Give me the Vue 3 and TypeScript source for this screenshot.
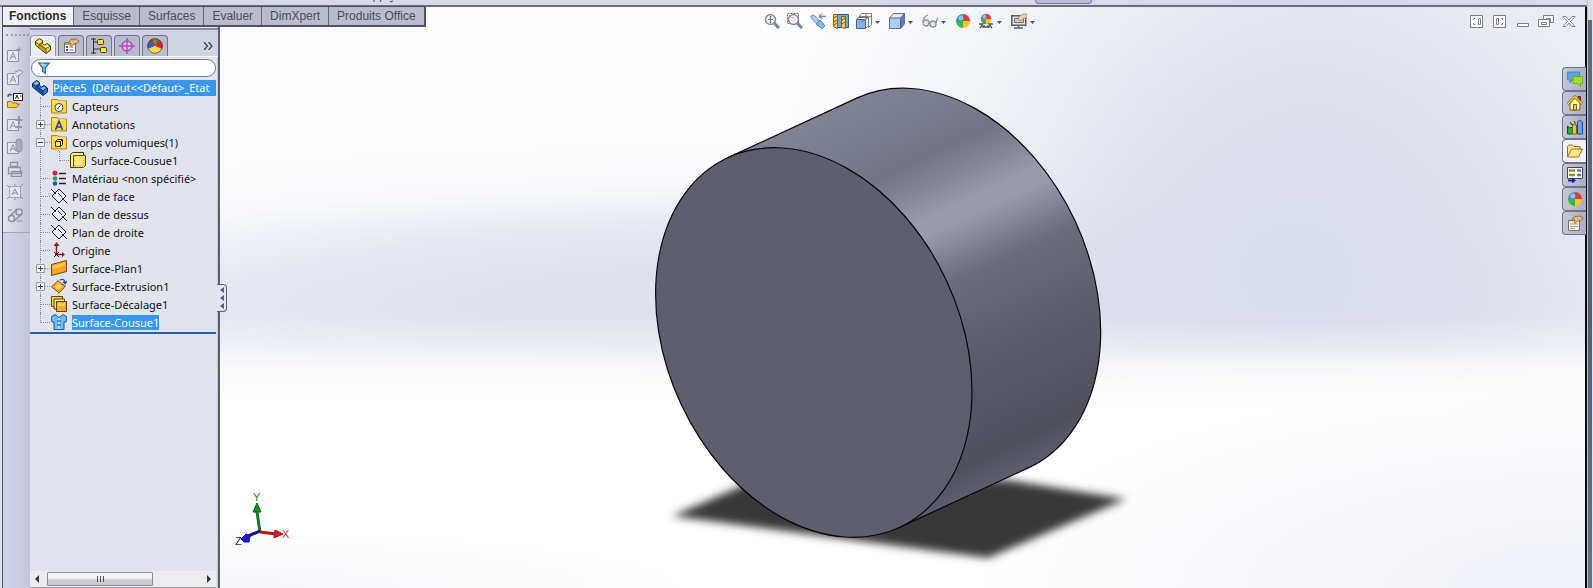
<script setup lang="ts">
import { ref } from 'vue'

interface TreeRow {
  label: string
  icon: string
  depth: number
  expander?: '+' | '-'
  selected?: boolean
  last?: boolean
}

const ball =
  '<path d="M8 8V1A7 7 0 0 0 1 8z" fill="#3d8fe0"/><path d="M8 8V1A7 7 0 0 1 15 8z" fill="#e8343a"/>' +
  '<path d="M8 8H1A7 7 0 0 0 8 15z" fill="#3bb54a"/><path d="M8 8H15A7 7 0 0 1 8 15z" fill="#f3c623"/>' +
  '<circle cx="6" cy="5" r="2.5" fill="#fff" opacity=".45"/>'
const folder = '<path d="M.500 1.500h6l1.500 1.500h7.500v12h-15z" fill="#ffd83c" stroke="#b28a10"/><path d="M1.500 4h13" stroke="#fff3a8"/>'
const hand = '<path d="M5 5l3-3.500 5-.5 3 2-2 2.500-3 .5-3 2.500-1-1 1-2z" fill="#eab678" stroke="#8a5a2b" stroke-width=".8"/>'
const part = (light: string, mid: string, dark: string, line: string) =>
  `<path d="M.500 3.500l4-3 3 2v3l2 1.500 2.500-1.500 3.500 2.500v4l-4.500 3.500-10.500-8.500z" fill="${mid}" stroke="${line}"/>` +
  `<path d="M1.500 3.500l3-2 2.500 1.500-3 2zM8.500 8.500l3.500-2 2.500 2-3.500 2z" fill="${light}"/>` +
  `<path d="M4.500 6l2.500-1.500v3l4 3v4.500l-6.500-5.500z" fill="${dark}"/><path d="M1 4.500l3 2v3M4 6.500l3.500-2M11 10.500v4.500M11 10.500l4-2.500M4 6.500l7 4.500" fill="none" stroke="${line}" stroke-width=".7"/>`
const sheet = '<path d="M.500 4.500h11v11h-11z" fill="#e6e8f0" stroke="#8d91a3"/><path d="M3 13.500l3-7 3 7M4 11h4" fill="none" stroke="#8d91a3"/>'
const plane = '<path d="M8 1l7 7-7 7-7-7z" fill="#eceef5" stroke="#222"/><path d="M0 1l5 5M11 10l5 5M7 5l4 4" stroke="#222" fill="none"/>'
const lens = '<path d="M10 10l5 5" stroke="#5e86bf" stroke-width="3"/><circle cx="6.500" cy="6.500" r="5" fill="#eef1f6" stroke="#888b96" stroke-width="1.500"/>'

const icons: Record<string, string> = {
  part: part('#fff36b', '#f2d322', '#c79c14', '#3a3006'),
  partBlue: part('#7cc4ff', '#2277d8', '#0f50ad', '#08265c'),
  props: '<path d="M1.500 4.500h11v10h-11z" fill="#f7f7f2" stroke="#6d6f78"/><path d="M2 6h10" stroke="#d6a437" stroke-width="2"/><path d="M3 9h2M3 12h2" stroke="#2d65c8" stroke-width="2"/><path d="M6.500 9h4M6.500 12h4" stroke="#777"/>' + hand,
  config: '<path d="M2.500 0v16M2.500 4h5M2.500 11h7M0 1h5M0 15h5" stroke="#333" fill="none"/><rect x="6.500" y="1.500" width="6" height="5" rx="1" fill="#f4e13a" stroke="#4c4300"/><rect x="9.500" y="9.500" width="6" height="5" rx="1" fill="#f4e13a" stroke="#4c4300"/>',
  target: '<circle cx="8" cy="8" r="5" fill="#e3c5ec" stroke="#b445c8" stroke-width="1.500"/><path d="M8 0v16M0 8h16" stroke="#b445c8" stroke-width="1.500"/>',
  wheel: '<path d="M8 8L1 11A7.500 7.500 0 0 1 5 1z" fill="#2b62cc"/><path d="M8 8L5 1a7.500 7.500 0 0 1 6 0z" fill="#3aa648"/><path d="M8 8l3-7a7.500 7.500 0 0 1 4 10z" fill="#dc2127"/><path d="M8 8l7 3a7.500 7.500 0 0 1-14 0z" fill="#f2dc48"/><path d="M8 8L5 1a7.500 7.500 0 0 0-3 2.500z" fill="#dc2127"/><circle cx="8" cy="8" r="7.300" fill="none" stroke="#33384a" stroke-width=".7"/>',
  funnel: '<path d="M2 2.500h12l-4.500 5.500v6l-3-2v-4z" fill="#8ec9f2" stroke="#1d5fa8" stroke-width="1.300"/><path d="M4.500 3.500h3" stroke="#fff"/>',
  sensors: folder + '<circle cx="8" cy="9.500" r="4" fill="#fff" stroke="#444"/><path d="M6.500 11l3-3.500" stroke="#222"/>',
  notes: folder + '<path d="M4.500 14l3.500-9 3.500 9M5.800 11h4.500" fill="none" stroke="#1c3fb5" stroke-width="1.500"/>',
  bodies: folder + '<path d="M4.500 7.500h5v5h-5zM4.500 7.500l2-2h5l-2 2M11.500 5.500v5l-2 2" fill="#ffe96a" stroke="#222"/>',
  solid: '<path d="M.500 2.500l2-2h11v13l-2 2h-11z" fill="#fff17a" stroke="#3d3600"/><path d="M3.500 3.500h12v10l-2 2h-10z" fill="#f6d637" stroke="#5b4a00"/><path d="M5 5h8v8h-8z" fill="#ffec84"/>',
  material: '<circle cx="4" cy="3" r="2.500" fill="#d5243a"/><circle cx="4" cy="8.500" r="2.300" fill="#2aa04a"/><circle cx="4" cy="13.500" r="2.300" fill="#2456cf"/><path d="M8 3.500h7M8 8.500h7M8 13.500h7" stroke="#222" stroke-width="1.500"/>',
  plane,
  origin: '<path d="M5.500 13V3M4 12.500h9" stroke="#9b1a22" stroke-width="1.500"/><path d="M5.500 0l3 4h-6zM14 12.500l-3-2.500v5z" fill="#9b1a22"/><path d="M3 10l5 5M8 10l-5 5" stroke="#222"/>',
  surfPlane: '<path d="M.500 4.500l15-4v11l-15 4z" fill="#f7a51c" stroke="#7a4a00"/><path d="M2 6l12-3.500v3l-12 3.500z" fill="#ffca55"/>',
  surfExtrude: '<path d="M.500 9l6.500-6.500 3 3 4.500 2.500-6.500 7-4-3.500z" fill="#f8a71f" stroke="#7a4a00"/><path d="M3.500 9l4-4 4 3-4 4z" fill="#ffcf63"/><path d="M9 2c3-1.500 5 0 5 3M11.800 4l2.500 1.500 1.500-2.500" fill="none" stroke="#2a3fb8" stroke-width="1.300"/>',
  surfOffset: '<path d="M.500 .500h11v10h-11z" fill="#f8cf2b" stroke="#5c4300"/><path d="M3 3h10.500v10h-10.500z" fill="#ffe989" stroke="#5c4300"/><path d="M5.500 5.500h10v10h-10z" fill="#f8a71f" stroke="#5c4300"/><path d="M7 7h7v3h-7z" fill="#ffcf63"/>',
  knit: '<path d="M0 3l4-2.500 4 3 4-3 4 2.500-1 5-2 0v7.500h-10v-7.500h-2z" fill="#6cbcfb" stroke="#1856a8"/><path d="M8 4v11" stroke="#fff"/><path d="M6 7h4M6 11h4" stroke="#0c4795"/>',
  note1: sheet + '<path d="M12 1v5M9.500 3.500h5M10.500 2l3 3M13.500 2l-3 3" stroke="#8d91a3" stroke-width=".8"/>',
  note2: sheet + '<path d="M8 3l5-2 3 2-3 3-4 2" fill="#d8dae4" stroke="#8d91a3"/>',
  noteOpen: '<path d="M6.500 1.500h9v7h-9z" fill="#fff" stroke="#222"/><path d="M8.500 7l1.500-4 1.500 4M13 4h1.500" fill="none" stroke="#222"/><path d="M1 5c0-3 2-3 4-2" stroke="#2850c8" fill="none" stroke-width="1.500"/><path d="M.500 15.500v-6h4l1 1.500h4v1h3l-3 3.500h-8z" fill="#ffce3b" stroke="#a9720b"/>',
  note3: sheet + '<path d="M12 1v8M8.500 5h7M9 12h6" stroke="#9296a6" stroke-width="2"/>',
  note4: sheet + '<rect x="9" y="1" width="6" height="13" rx="3" fill="#a7aab8" stroke="#8d91a3"/>',
  printer: '<path d="M3.500 1.500h7v4h-7zM1.500 6.500h12v6h-12zM4.500 10.500h10v5h-10z" fill="#dfe1ea" stroke="#8d91a3" stroke-width="1.300"/>',
  burst: '<path d="M2.500 2.500h11v11h-11z" fill="#e3e5ee" stroke="#8d91a3" stroke-dasharray="2 1"/><path d="M5 11l3-6 3 6M6 9h4M0 1l3 3M13 3l3-3M0 15l3-3M13 12l3 3M8 0v3M8 13v3" fill="none" stroke="#8d91a3"/>',
  link: '<path d="M2 10l8-8M7 14l8-7" stroke="#8d91a3" stroke-width="1.500"/><circle cx="4.500" cy="11.500" r="3" fill="#dfe1ea" stroke="#8d91a3" stroke-width="1.500"/><circle cx="12" cy="5" r="3" fill="#dfe1ea" stroke="#8d91a3" stroke-width="1.500"/><path d="M1 3h4M10 14h5" stroke="#8d91a3"/>',
  zoomFit: lens + '<path d="M4 6.500h5M6.500 4v5" stroke="#777"/><path d="M6.500 2.500l1 1.500h-2zM6.500 10.500l1-1.500h-2z" fill="#555"/>',
  zoomArea: '<path d="M.500.500h11v10h-11z" fill="none" stroke="#777" stroke-dasharray="2 1"/>' + lens + '<path d="M4 4.500h3" stroke="#aaa"/>',
  prevView: '<path d="M.500 3l3.500-1 6 6.500-3 3-5.500-6z" fill="#a8cdf0" stroke="#6b94c4"/><path d="M6 11l4-4 5 6-3 2.500z" fill="#7fbcee" stroke="#4f80b8"/><path d="M9 3.500h7M9 3.500l3-2.500M9 3.500l3 2.500" stroke="#6d8db4" fill="none" stroke-width="1.300"/>',
  section: '<path d="M4.500 1.500h11v13h-11z" fill="#6ca7e6" stroke="#2f5a94"/><path d="M.500 1.500h4v14l-4-2zM8.500 3.500h4v12l-4-1z" fill="#f5d23a" stroke="#7a6517"/><path d="M1 5l3-2M1 9l3-2M1 12l3-2M9 7l3-2M9 11l3-2" stroke="#7a6517"/>',
  orient: '<path d="M5.500 .500h10v11l-3 3v-10h-10z" fill="#f3f4f8" stroke="#777c88"/><path d="M.500 6.500h9v9h-9z" fill="#7fb2ea" stroke="#45628f"/><path d="M.500 6.500l3-3h9l-3 3M9.500 15.500l3-3M10 .500v6M5 9l10-6" fill="none" stroke="#777c88"/>',
  display: '<path d="M.500 5l4-4.500h11v10l-4 5h-11z" fill="#dfeafa" stroke="#5f6c88"/><path d="M11.500 5l4-4.500v10l-4 5z" fill="#4a7fcc" stroke="#5f6c88"/><path d="M.500 5h11v10.500h-11z" fill="#a9cdf5" stroke="#5f6c88"/>',
  glasses: '<circle cx="4" cy="10" r="3" fill="#dce9f3" stroke="#8b9098" stroke-width="1.300"/><circle cx="11" cy="11" r="3" fill="#dce9f3" stroke="#8b9098" stroke-width="1.300"/><path d="M1 9c0-4 2-6 5-7M14 10c1-3 1-5 2-5M7 10h1" fill="none" stroke="#8b9098" stroke-width="1.300"/>',
  ball,
  scene: '<g transform="translate(2 0) scale(.75)">' + ball + '</g><path d="M1 11h4l-3 4M15 11h-4l3 4M4 14h8M6 12v3M10 12v3" stroke="#555862" stroke-width="1.300" fill="none"/>',
  settings: '<path d="M.750 2.750h14v9.500h-14z" fill="#dce0e8" stroke="#5a5c66" stroke-width="1.500"/><path d="M3.500 5.500h9v4h-9z" fill="#c4c9d4" stroke="#777"/><path d="M7.500 12v2M3 15h9" stroke="#5a5c66" stroke-width="1.500"/><path d="M7 5l4-4h5v3l-4 2-3 2z" fill="#f0cf98" stroke="#a58356" stroke-width=".7"/>',
  forum: '<path d="M.500 1h12v8H5l-2 3V9H.500z" fill="#5aa9e6" stroke="#3a7fc0" stroke-width=".8"/><path d="M6 5.500h9.500v7h-2v3l-3-3H6z" fill="#9be01c" stroke="#6ea80e" stroke-width=".8"/>',
  home: '<path d="M11 1.500h2.500v5h-2.500z" fill="#d42d2d" stroke="#7c1616"/><path d="M3 8l5-5 5 5v7H3z" fill="#fff6a0" stroke="#7b5c08"/><path d="M.800 9L8 1.800l7.200 7.200" fill="none" stroke="#7b5c08" stroke-width="2.600"/><path d="M.800 9L8 1.800l7.200 7.200" fill="none" stroke="#f2cf35" stroke-width="1.400"/><path d="M6.500 9.500h3v5.500h-3z" fill="#f7c73a" stroke="#7b5c08"/>',
  library: '<path d="M.500 7l2 1.500h3v6.500h-5z" fill="#1fae38" stroke="#0b5a1a"/><path d="M5.500 5l2 1h2v9h-4z" fill="#f6c124" stroke="#835e05"/><path d="M10.500 3l2-2 3 2v12h-5z" fill="#6aa5ea" stroke="#27488a"/><path d="M3 3l2 3M7 2l1.500 3" stroke="#333"/>',
  folderOpen: '<path d="M.500 14v-10.500l1-1.500h4l1.500 1.500h6v3" fill="#ffe88a" stroke="#94700c"/><path d="M.500 14l4-8h11l-4 8z" fill="#ffe98c" stroke="#94700c"/>',
  palette: '<path d="M.500 .500h15v11h-15z" fill="#fff" stroke="#44464f"/><path d="M2 3.500h6M2 8h6" stroke="#9a9a14" stroke-width="2.500"/><path d="M10 3.500h4M10 8h4" stroke="#6076c0" stroke-width="2.500"/><path d="M1 13.500h5" stroke="#1420c8" stroke-width="2"/><path d="M5 10.500l4 3-4 3z" fill="#1420c8"/>',
  custom: '<path d="M1.500 5.500h11v10h-11z" fill="#f3f1e4" stroke="#77726a"/><path d="M3 9h8M3 11.500h8M3 13.500h5" stroke="#a9a595"/>' + hand,
}

const commandTabs = ['Fonctions', 'Esquisse', 'Surfaces', 'Evaluer', 'DimXpert', 'Produits Office']
const activeTab = ref('Fonctions')

const panelTabs = [
  { icon: 'part', name: 'Arbre de création' },
  { icon: 'props', name: 'Propriétés' },
  { icon: 'config', name: 'Configurations' },
  { icon: 'target', name: 'DimXpert' },
  { icon: 'wheel', name: 'Affichage' },
]
const activePanel = ref('part')
const filter = ref('')

const sideTools = [
  { icon: 'note1', name: 'Nouveau bloc' },
  { icon: 'note2', name: 'Éditer' },
  { icon: 'noteOpen', name: 'Insérer' },
  { icon: 'note3', name: 'Ajouter' },
  { icon: 'note4', name: 'Recréer' },
  { icon: 'printer', name: 'Enregistrer' },
  { icon: 'burst', name: 'Exploser' },
  { icon: 'link', name: 'Courroie' },
]

const rows: TreeRow[] = [
  { label: 'Capteurs', icon: 'sensors', depth: 1 },
  { label: 'Annotations', icon: 'notes', depth: 1, expander: '+' },
  { label: 'Corps volumiques(1)', icon: 'bodies', depth: 1, expander: '-' },
  { label: 'Surface-Cousue1', icon: 'solid', depth: 2 },
  { label: 'Matériau <non spécifié>', icon: 'material', depth: 1 },
  { label: 'Plan de face', icon: 'plane', depth: 1 },
  { label: 'Plan de dessus', icon: 'plane', depth: 1 },
  { label: 'Plan de droite', icon: 'plane', depth: 1 },
  { label: 'Origine', icon: 'origin', depth: 1 },
  { label: 'Surface-Plan1', icon: 'surfPlane', depth: 1, expander: '+' },
  { label: 'Surface-Extrusion1', icon: 'surfExtrude', depth: 1, expander: '+' },
  { label: 'Surface-Décalage1', icon: 'surfOffset', depth: 1 },
  { label: 'Surface-Cousue1', icon: 'knit', depth: 1, selected: true, last: true },
]

const viewTools = [
  { icon: 'zoomFit', name: 'Zoom au mieux' },
  { icon: 'zoomArea', name: 'Zoom fenêtre' },
  { icon: 'prevView', name: 'Vue précédente' },
  { icon: 'section', name: 'Vue en coupe' },
  { icon: 'orient', name: 'Orientation', menu: true },
  { icon: 'display', name: "Style d'affichage", menu: true },
  { icon: 'glasses', name: 'Cacher/Montrer', menu: true },
  { icon: 'ball', name: 'Apparence' },
  { icon: 'scene', name: 'Scène', menu: true },
  { icon: 'settings', name: 'Paramètres', menu: true },
]

const windowTools = [
  { name: 'Volet gauche', art: '<path d="M1.500 1.500h12v12h-12z"/><path d="M6 4.500H4.500V6M4.500 9v1.500H6M9.500 4.500h2v6h-2z"/>' },
  { name: 'Volet droit', art: '<path d="M1.500 1.500h12v12h-12z"/><path d="M9 4.500h1.500V6M10.500 9v1.500H9M4.500 4.500h2v6h-2z"/>' },
  { name: 'Réduire', art: '<path d="M2.500 9.500h11v3h-11z"/>' },
  { name: 'Restaurer', art: '<path d="M5.500 5.500v-4h10v7h-3.500M.500 5.500h11v7H.500zM3.500 8.500h5v2h-5zM8.500 5V4.500h4V8"/>' },
  { name: 'Fermer', art: '<path d="M2 2.500h3l3 3.500 3-3.500h3L9.500 7.500l4.500 5h-3L8 9l-3 3.500H2l4.500-5z"/>' },
]

const taskTabs = [
  { icon: 'forum', name: 'Forum' },
  { icon: 'home', name: 'Ressources' },
  { icon: 'library', name: 'Bibliothèque' },
  { icon: 'folderOpen', name: 'Explorateur' },
  { icon: 'palette', name: 'Palette de vues' },
  { icon: 'ball', name: 'Apparences' },
  { icon: 'custom', name: 'Propriétés personnalisées' },
]
const activeTask = ref('folderOpen')
</script>

<template>
  <div class="app">
    <div class="window">
      <header class="ribbon">
        <svg class="ribbon-marks" viewBox="0 0 24 3" aria-hidden="true">
          <path d="M1 0v2M8 0l-1 2M20 1l-3 1" stroke="#4a4c58" fill="none" />
        </svg>
        <span class="ribbon-grip"></span>
      </header>

      <div class="main">
        <nav class="command-tabs" aria-label="Gestionnaire de commandes">
          <button
            v-for="tab in commandTabs"
            :key="tab"
            type="button"
            :class="{ active: tab === activeTab }"
            @click="activeTab = tab"
          >{{ tab }}</button>
        </nav>

        <aside class="side">
          <div class="side-tools">
            <button v-for="tool in sideTools" :key="tool.icon" type="button" :aria-label="tool.name">
              <svg class="icon" viewBox="0 0 16 16" v-html="icons[tool.icon]"></svg>
            </button>
          </div>
        </aside>

        <section class="panel">
          <div class="panel-tabs">
            <button
              v-for="tab in panelTabs"
              :key="tab.icon"
              type="button"
              :aria-label="tab.name"
              :class="{ active: tab.icon === activePanel }"
              @click="activePanel = tab.icon"
            >
              <svg class="icon" viewBox="0 0 16 16" v-html="icons[tab.icon]"></svg>
            </button>
            <button type="button" class="more" aria-label="Plus">
              <svg viewBox="0 0 10 8"><path d="M1 0l3.500 4L1 8M5.500 0L9 4 5.500 8" fill="none" stroke="#3f4256" stroke-width="1.300" /></svg>
            </button>
          </div>
          <label class="filter">
            <svg class="funnel" viewBox="0 0 16 16" v-html="icons.funnel"></svg>
            <input v-model="filter" type="text" aria-label="Filtrer" />
          </label>

          <div class="tree">
            <div class="root">
              <svg class="icon" viewBox="0 0 16 16" v-html="icons.partBlue"></svg>
              <span class="root-label">Pièce5&nbsp; (Défaut&lt;&lt;Défaut&gt;_Etat</span>
            </div>
            <ul>
              <li v-for="(row, i) in rows" :key="i" :class="{ last: row.last }">
                <span class="stem" :class="{ through: row.depth === 2 }">
                  <button v-if="row.expander" type="button" class="expander" :aria-label="row.label">
                    <svg viewBox="0 0 9 9">
                      <path d="M.5.5h8v8h-8z" fill="#f6f7fa" stroke="#9a9eac" />
                      <path :d="row.expander === '+' ? 'M2 4.500h5M4.500 2v5' : 'M2 4.500h5'" stroke="#444" />
                    </svg>
                  </button>
                </span>
                <span v-if="row.depth === 2" class="stem end"></span>
                <svg class="icon" viewBox="0 0 16 16" v-html="icons[row.icon]"></svg>
                <span class="label" :class="{ selected: row.selected }">{{ row.label }}</span>
              </li>
            </ul>
          </div>

          <div class="scrollbar">
            <button type="button" aria-label="Défiler à gauche"><svg viewBox="0 0 4 8"><path d="M4 0v8L0 4z" fill="#333" /></svg></button>
            <div class="track"><span class="thumb"><i></i><i></i><i></i></span></div>
            <button type="button" aria-label="Défiler à droite"><svg viewBox="0 0 4 8"><path d="M0 0v8l4-4z" fill="#333" /></svg></button>
          </div>

          <button type="button" class="splitter" aria-label="Réduire le volet">
            <svg viewBox="0 0 4 24"><path d="M4 1v6L0 4zM4 9v6L0 12zM4 17v6L0 20z" fill="#5559a0" /></svg>
          </button>
        </section>

        <main class="viewport">
          <svg class="model" viewBox="220 7 1365 581" role="img" aria-label="Cylindre">
            <defs>
              <linearGradient id="side" gradientUnits="userSpaceOnUse" x1="728" y1="157.600" x2="899" y2="527.600">
                <stop offset="0" stop-color="#808296" />
                <stop offset=".12" stop-color="#797b90" />
                <stop offset=".2" stop-color="#747588" />
                <stop offset=".27" stop-color="#838496" />
                <stop offset=".34" stop-color="#9a9bae" />
                <stop offset=".38" stop-color="#999aad" />
                <stop offset=".44" stop-color="#828394" />
                <stop offset=".51" stop-color="#6a6c7b" />
                <stop offset=".66" stop-color="#5e606e" />
                <stop offset=".85" stop-color="#545563" />
                <stop offset=".93" stop-color="#50515c" />
                <stop offset="1" stop-color="#5c5e6d" />
              </linearGradient>
              <filter id="soft" x="-10%" y="-30%" width="120%" height="160%"><feGaussianBlur stdDeviation="4" /></filter>
            </defs>
            <path d="M672 516L765 476L1008 480L1126 499L988 558Z" fill="#393939" filter="url(#soft)" />
            <path
              d="M728 157.600L856.700 98.100A203.800 146.400 65 0 1 1028.300 467.900L899.600 527.400Z"
              fill="url(#side)"
              stroke="#07070c"
              stroke-width="1.200"
            />
            <ellipse rx="203.800" ry="146.400" transform="translate(813.800 342.500) rotate(65)" fill="#5d5f6e" stroke="#07070c" stroke-width="1.200" />
          </svg>

          <div class="view-tools">
            <button v-for="tool in viewTools" :key="tool.icon" type="button" :aria-label="tool.name">
              <svg class="icon" viewBox="0 0 16 16" v-html="icons[tool.icon]"></svg>
              <svg v-if="tool.menu" class="caret" viewBox="0 0 5 3"><path d="M0 0h5L2.500 3z" fill="#4d5368" /></svg>
            </button>
          </div>

          <div class="window-tools">
            <button v-for="tool in windowTools" :key="tool.name" type="button" :aria-label="tool.name">
              <svg class="icon" viewBox="0 0 16 16" fill="#fff" stroke="#7b7f8c" v-html="tool.art"></svg>
            </button>
          </div>

          <div class="task-tabs">
            <button
              v-for="tab in taskTabs"
              :key="tab.icon"
              type="button"
              :aria-label="tab.name"
              :class="{ active: tab.icon === activeTask }"
              @click="activeTask = tab.icon"
            >
              <svg class="icon" viewBox="0 0 16 16" v-html="icons[tab.icon]"></svg>
            </button>
          </div>

          <svg class="triad" viewBox="0 0 56 58" role="img" aria-label="Repère">
            <path d="M25 42L22 22" stroke="#1d7a24" stroke-width="3" />
            <path d="M22 13l4 9-8 0z" fill="#1f8a28" stroke="#14561a" />
            <path d="M25 42l16 2" stroke="#b01818" stroke-width="3" />
            <path d="M48 44l-8-4-1 8z" fill="#e01c1c" stroke="#a01212" />
            <path d="M25 41l-14 6" stroke="#14148c" stroke-width="3" />
            <path d="M6 49l5-5 4 2-1 6-5 0z" fill="#1c1cd8" stroke="#10108c" />
            <text x="18" y="11" fill="#1f7a28">Y</text>
            <text x="47" y="48" fill="#d01c1c">X</text>
            <text x="0" y="55" fill="#1818b8">Z</text>
          </svg>
        </main>
      </div>
    </div>
    <div class="frame"></div>
  </div>
</template>

<style>
body {
  margin: 0;
}
</style>

<style scoped>
.app {
  display: flex;
  height: 100vh;
  overflow: hidden;
  font-family: 'Noto Sans', 'Open Sans', sans-serif;
  font-size: 11px;
  color: #111;
}
button {
  padding: 0;
  margin: 0;
  border: 0;
  background: none;
  font: inherit;
  color: inherit;
}
svg {
  display: block;
  flex: none;
}
.icon {
  width: 16px;
  height: 16px;
}
.window {
  flex: 1;
  min-width: 0;
  display: flex;
  flex-direction: column;
}
.ribbon {
  position: relative;
  height: 5px;
  background: #d7d9e8;
  border-bottom: 2px solid #6b6d80;
}
.ribbon-marks {
  position: absolute;
  left: 373px;
  top: 0;
  width: 24px;
  height: 3px;
}
.ribbon-grip {
  position: absolute;
  right: 495px;
  top: 0;
  width: 55px;
  height: 3px;
  background: #b9b9d6;
  border: 1px solid #7d7fa0;
  border-top: 0;
  border-radius: 0 0 5px 5px;
}
.main {
  position: relative;
  flex: 1;
  min-height: 0;
  display: flex;
  margin-left: 2px;
  border-left: 1px solid #4a4c5c;
  box-shadow: -2px 0 #e3e5ee;
}
.command-tabs {
  position: absolute;
  z-index: 2;
  left: -1px;
  top: -1px;
  display: flex;
  border: 1px solid #4f5162;
  border-bottom-width: 2px;
  border-right-width: 2px;
  background: #b9bccd;
  font-family: 'Liberation Sans', Arial, sans-serif;
  font-size: 12px;
}
.command-tabs button {
  height: 18px;
  padding: 0 8px;
  color: #4b4d58;
  line-height: 18px;
}
.command-tabs button + button {
  border-left: 1px solid #63657a;
}
.command-tabs .active {
  padding: 0 7px 0 6px;
  background: #f2f3f7;
  color: #2a2b33;
  font-weight: bold;
  margin-bottom: -1px;
}
.side {
  width: 27px;
  flex: none;
  padding-top: 20px;
  background: linear-gradient(90deg, #d0d4e6, #c2c6dc);
}
.side-tools {
  display: flex;
  flex-direction: column;
  align-items: center;
  gap: 7px;
  padding: 19px 3px 9px 0;
  background: linear-gradient(90deg, #e3e5ef, #bfc2d3);
  border-bottom: 1px solid #a3a6b8;
  position: relative;
}
.side-tools::before {
  content: '';
  position: absolute;
  top: 7px;
  left: 3px;
  right: 1px;
  border-top: 2px dotted #9b9eb0;
}
.panel {
  position: relative;
  width: 188px;
  flex: none;
  display: flex;
  flex-direction: column;
  padding-top: 21px;
  background: #e1e4ed;
  border-right: 2px solid #5a5c6e;
  box-shadow: inset -1px 0 #c9ccda;
}
.panel-tabs {
  display: flex;
  align-items: flex-end;
  gap: 2px;
  height: 26px;
  padding: 0 2px 0 0;
  border-top: 2px solid #8b8ea1;
  border-bottom: 1px solid #f6f7fb;
  background: #d0d3e2;
}
.panel-tabs button {
  width: 26px;
  height: 21px;
  display: flex;
  justify-content: center;
  align-items: center;
  border: 1px solid #70748c;
  border-bottom: 0;
  border-radius: 4px 4px 0 0;
  background: #b8bbcd;
  box-sizing: border-box;
}
.panel-tabs button.active {
  background: #eceef5;
  border-color: #8f93a8;
}
.panel-tabs .more {
  margin-left: auto;
  width: 16px;
  border: 0;
  background: none;
}
.more svg {
  width: 10px;
  height: 8px;
}
.filter {
  display: flex;
  align-items: center;
  height: 16px;
  margin: 2px 2px 2px 1px;
  border: 1px solid #767a92;
  border-radius: 9px;
  background: #fff;
}
.funnel {
  width: 14px;
  height: 14px;
  margin-left: 5px;
}
.filter input {
  flex: 1;
  min-width: 0;
  margin-right: 8px;
  padding: 0 4px;
  border: 0;
  outline: 0;
  background: none;
  font: inherit;
}
.tree {
  flex: 1;
  min-height: 0;
  overflow: hidden;
}
.root,
li {
  display: flex;
  align-items: center;
  height: 18px;
  white-space: nowrap;
}
.root {
  padding-left: 2px;
  gap: 5px;
  margin-right: 2px;
  overflow: hidden;
}
.root-label {
  flex: 1;
  overflow: hidden;
  background: #3697f0;
  color: #fff;
  line-height: 16px;
}
ul {
  margin: 0 2px 0 0;
  padding: 0 0 1px 2px;
  list-style: none;
  border-bottom: 2px solid #2463b0;
}
.stem {
  position: relative;
  align-self: stretch;
  width: 19px;
  flex: none;
}
.stem::before {
  content: '';
  position: absolute;
  left: 8px;
  top: 0;
  bottom: 0;
  border-left: 1px dotted #8a8d9a;
}
.stem::after {
  content: '';
  position: absolute;
  left: 9px;
  right: 1px;
  top: 9px;
  border-top: 1px dotted #8a8d9a;
}
.stem.through::after {
  display: none;
}
.stem.end::before,
.last .stem::before {
  bottom: 8px;
}
.expander {
  position: absolute;
  z-index: 1;
  left: 4px;
  top: 5px;
}
.expander svg {
  width: 9px;
  height: 9px;
}
.label {
  margin-left: 5px;
  line-height: 15px;
}
.label.selected {
  background: #3697f0;
  color: #fff;
}
.scrollbar {
  display: flex;
  height: 16px;
  margin-right: 2px;
  background: #ececee;
  border-bottom: 1px solid #9a9cab;
}
.scrollbar button {
  width: 14px;
  display: flex;
  justify-content: center;
  align-items: center;
}
.scrollbar button svg {
  width: 4px;
  height: 8px;
}
.track {
  flex: 1;
  display: flex;
  padding: 1px 3px;
}
.thumb {
  width: 70%;
  display: flex;
  justify-content: center;
  align-items: center;
  gap: 2px;
  border: 1px solid #8d8f96;
  border-radius: 1px;
  background: linear-gradient(#f5f5f6 45%, #d2d3d8 55%, #c6c7cd);
  box-sizing: border-box;
}
.thumb i {
  width: 1px;
  height: 6px;
  background: #4c4d55;
}
.splitter {
  position: absolute;
  z-index: 2;
  right: -9px;
  top: 50%;
  width: 10px;
  height: 28px;
  margin-top: -14px;
  display: flex;
  justify-content: center;
  align-items: center;
  background: #e4e6f0;
  border: 1px solid #5a5c6e;
  border-left: 0;
  border-radius: 0 4px 4px 0;
  box-sizing: border-box;
}
.splitter svg {
  width: 4px;
  height: 24px;
}
.viewport {
  position: relative;
  flex: 1;
  min-width: 0;
  border-right: 2px solid #0a0a0c;
  background:
    radial-gradient(ellipse 45% 36% at 100% 100%, #f1f2f7 20%, rgba(241, 242, 247, 0)),
    radial-gradient(ellipse 35% 10% at 0% 100%, #f6f6fa, rgba(246, 246, 250, 0)),
    linear-gradient(rgba(255, 255, 255, 0) 53%, rgba(255, 255, 255, 0.3) 58%, rgba(255, 255, 255, 0.75) 62%, rgba(255, 255, 255, 0.95) 66%, #fff 69%),
    radial-gradient(ellipse 40% 95% at 79% 45%, #d8dbe9, rgba(220, 223, 235, 0.85) 35%, rgba(229, 232, 240, 0.55) 65%, rgba(240, 242, 247, 0)),
    radial-gradient(ellipse 90% 30% at 42% 52%, #dfe2ec 25%, rgba(225, 228, 238, 0.85) 48%, rgba(238, 240, 247, 0.4) 72%, rgba(244, 245, 250, 0)),
    linear-gradient(90deg, #fefefe 60%, #f0f2f6 80%);
}
.model {
  width: 100%;
  height: 100%;
}
.view-tools {
  position: absolute;
  top: 6px;
  left: 0;
  right: 5px;
  display: flex;
  justify-content: center;
  gap: 7px;
}
.view-tools button {
  display: flex;
  align-items: center;
}
.caret {
  width: 5px;
  height: 3px;
  margin: 2px 2px 0 3px;
}
.window-tools {
  position: absolute;
  top: 7px;
  right: 8px;
  display: flex;
  gap: 7px;
}
.task-tabs {
  position: absolute;
  top: 60px;
  right: -1px;
  display: flex;
  flex-direction: column;
}
.task-tabs button {
  width: 24px;
  height: 24px;
  display: flex;
  justify-content: center;
  align-items: center;
  border: 1px solid #6f7389;
  border-right: 0;
  border-radius: 4px 0 0 4px;
  background: linear-gradient(90deg, #c5c8d8, #abaec2);
  box-sizing: border-box;
}
.task-tabs .active {
  background: #f1f2f7;
}
.triad {
  position: absolute;
  left: 15px;
  bottom: 40px;
  width: 56px;
  height: 58px;
  font-family: 'Liberation Sans', Arial, sans-serif;
  font-size: 11px;
}
.frame {
  width: 4px;
  flex: none;
  border-left: 1px solid #b9c6d2;
  border-right: 1px solid #dfe5ea;
  background: linear-gradient(#d8dee4 20px, #5f6d80 20px, #4f5f78 55%, #64748c);
}
</style>
